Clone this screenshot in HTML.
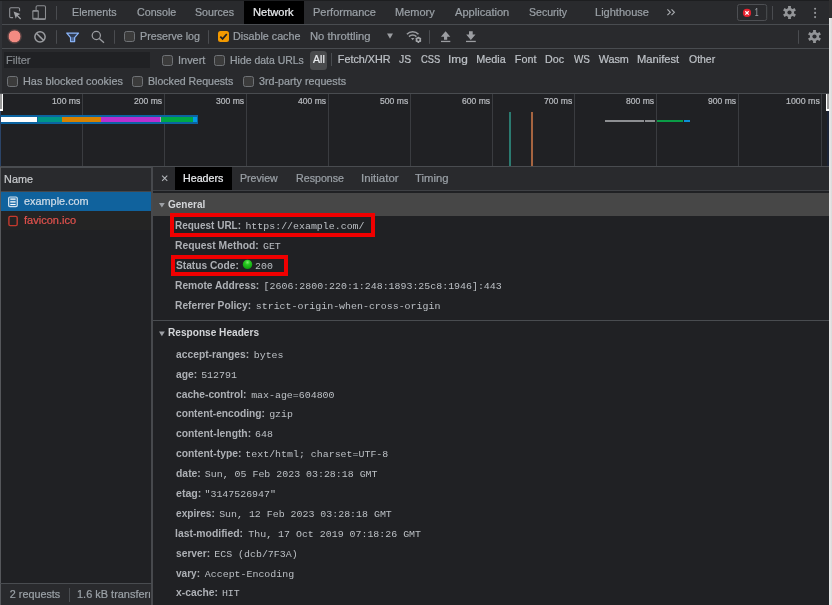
<!DOCTYPE html>
<html lang="en"><head><meta charset="utf-8"><title>DevTools - Network</title>
<style>
html,body{margin:0;padding:0;background:#202124;}
body{width:832px;height:605px;overflow:hidden;font:12px 'Liberation Sans',sans-serif;}
#root{will-change:transform;position:relative;width:832px;height:605px;overflow:hidden;background:#202124;}
#root>div,#root>svg,#tx>span,#tx>div{position:absolute;}
#tx{left:0;top:0;width:832px;height:605px;filter:blur(0.3px);}
.t{white-space:pre;transform-origin:0 50%;display:block;}
.n{font:10.8px/14px 'Liberation Sans',sans-serif;-webkit-text-stroke:0.22px currentColor;}
.b{font:bold 10.8px/14px 'Liberation Sans',sans-serif;}
.m{font:9.93px/13px 'Liberation Mono',monospace;}
.bar{background:#292a2d;}
.hl{background:#494c50;height:1px;}
.vl{background:#494c50;width:1px;}
.cb{width:9px;height:9px;border:1px solid #6f7276;border-radius:2.5px;background:#3b3b3b;box-sizing:content-box;}

</style></head>
<body>
<div id="root">
<!-- top tab bar -->
<div class="bar" style="left:0;top:0;width:832px;height:24px"></div>
<div class="hl" style="left:0;top:24px;width:832px"></div>
<div style="left:244px;top:1px;width:59.5px;height:23px;background:#000"></div>
<!-- toolbar row 2 -->
<div class="bar" style="left:0;top:25px;width:832px;height:23px"></div>
<div class="hl" style="left:0;top:48px;width:832px"></div>
<!-- filter rows -->
<div class="bar" style="left:0;top:49px;width:832px;height:44px"></div>
<div style="left:4px;top:52px;width:146px;height:16px;background:#202124"></div>
<div style="left:310px;top:51px;width:16.9px;height:18.9px;background:#4a4b4d;border-radius:3.5px"></div>
<div class="vl" style="left:331.4px;top:53px;height:13.4px"></div>
<div class="hl" style="left:0;top:93px;width:832px"></div>
<!-- timeline overview -->
<div style="left:0;top:94px;width:832px;height:72px;background:#202124"></div>
<!-- timeline grid + bars -->
<div class="vl" style="left:82px;top:94px;height:72px;background:#3a3c40"></div>
<div class="vl" style="left:164px;top:94px;height:72px;background:#3a3c40"></div>
<div class="vl" style="left:246px;top:94px;height:72px;background:#3a3c40"></div>
<div class="vl" style="left:328px;top:94px;height:72px;background:#3a3c40"></div>
<div class="vl" style="left:410px;top:94px;height:72px;background:#3a3c40"></div>
<div class="vl" style="left:492px;top:94px;height:72px;background:#3a3c40"></div>
<div class="vl" style="left:574px;top:94px;height:72px;background:#3a3c40"></div>
<div class="vl" style="left:656px;top:94px;height:72px;background:#3a3c40"></div>
<div class="vl" style="left:738px;top:94px;height:72px;background:#3a3c40"></div>
<div class="vl" style="left:821px;top:94px;height:72px;background:#3a3c40"></div>
<div style="left:0;top:115px;width:197.7px;height:9.4px;background:#0c64a1"></div>
<div style="left:1px;top:117px;width:36.0px;height:4.6px;background:#ffffff"></div>
<div style="left:37.5px;top:117px;width:24.5px;height:4.6px;background:#009688"></div>
<div style="left:62px;top:117px;width:38.5px;height:4.6px;background:#d68100"></div>
<div style="left:100.5px;top:117px;width:59.2px;height:4.6px;background:#b92fce"></div>
<div style="left:159.7px;top:117px;width:1.3px;height:4.6px;background:#c98fd0"></div>
<div style="left:161px;top:117px;width:31.5px;height:4.6px;background:#00a846"></div>
<div style="left:192.5px;top:117px;width:4.1px;height:4.6px;background:#039be5"></div>
<div style="left:508.5px;top:112px;width:2.4px;height:54px;background:#2b7a70"></div>
<div style="left:530.9px;top:112px;width:2.4px;height:54px;background:#a56440"></div>
<div style="left:604.5px;top:119.6px;width:39.2px;height:2.2px;background:#8d8f92"></div>
<div style="left:645.2px;top:119.6px;width:10.1px;height:2.2px;background:#8d8f92"></div>
<div style="left:656.7px;top:119.6px;width:26.1px;height:2.2px;background:#0a9c46"></div>
<div style="left:684.2px;top:119.6px;width:6.1px;height:2.2px;background:#0d8fd6"></div>
<div style="left:0;top:94px;width:3px;height:17px;background:#fff"></div>
<div style="left:0;top:94px;width:1.9px;height:15.2px;background:#9a9a9a"></div>
<div style="left:826px;top:94px;width:3px;height:17px;background:#fff"></div>
<div style="left:827.4px;top:94px;width:1.6px;height:15.2px;background:#9a9a9a"></div>
<div style="left:0;top:111px;width:1px;height:55px;background:#2b4468"></div>
<div class="hl" style="left:0;top:166px;width:832px;background:#494c50"></div>
<!-- name column -->
<div class="bar" style="left:1px;top:168px;width:150px;height:23px"></div>
<div class="hl" style="left:0;top:167px;width:152px"></div>
<div class="hl" style="left:0;top:191px;width:152px;background:#44464a"></div>
<div style="left:1px;top:192px;width:150px;height:19px;background:#10629d"></div>
<div style="left:1px;top:211px;width:150px;height:19px;background:#242424"></div>
<div class="vl" style="left:151px;top:167px;height:438px;width:2px;background:#47494d"></div>
<div class="vl" style="left:0;top:167px;height:438px;width:1px;background:#55575b"></div>
<div class="hl" style="left:0;top:583px;width:152px"></div>
<div class="bar" style="left:1px;top:584px;width:150px;height:21px"></div>
<div class="vl" style="left:69px;top:588px;height:14px"></div>
<!-- detail pane -->
<div class="bar" style="left:153px;top:167px;width:679px;height:23px"></div>
<div class="hl" style="left:153px;top:190px;width:679px;background:#3f4145"></div>
<div style="left:175px;top:167px;width:56.5px;height:23px;background:#000"></div>
<div style="left:153px;top:193px;width:679px;height:23px;background:#474747"></div>
<div class="hl" style="left:153px;top:320px;width:679px;background:#494c50"></div>
<!-- red annotation boxes -->
<div style="left:170.1px;top:213.3px;width:197px;height:15.4px;border:4px solid #f00000"></div>
<div style="left:170.8px;top:254.9px;width:109.3px;height:13.1px;border:4px solid #f00000"></div>
<!-- right light strip -->
<div style="left:829px;top:18px;width:3px;height:587px;background:linear-gradient(90deg,#ededed,#d9d9d9)"></div>
<div style="left:829px;top:0;width:3px;height:18px;background:#2f2f30"></div>
<!-- checkboxes -->
<div class="cb" style="left:124px;top:31px"></div>
<div class="cb" style="left:162px;top:55px"></div>
<div class="cb" style="left:213.9px;top:55px"></div>
<div class="cb" style="left:7px;top:76px"></div>
<div class="cb" style="left:132px;top:76px"></div>
<div class="cb" style="left:243px;top:76px"></div>
<div style="left:218px;top:31px;width:11px;height:11px;border-radius:2.5px;background:#f29900"></div>
<svg style="left:218px;top:31px" width="11" height="11" viewBox="0 0 11 11"><path d="M2.3 5.6 L4.6 7.9 L8.8 3" fill="none" stroke="#202124" stroke-width="1.7"/></svg>
<!-- edge strips -->
<div style="left:0;top:1px;width:2px;height:92px;background:#313337"></div>
<div style="left:0;top:0;width:829px;height:1px;background:#1d1e20"></div>
<!-- navy sliver under right handle --><div style="left:827px;top:111px;width:2px;height:55px;background:#1c2436"></div>
<!-- icon layer (page coordinates) -->
<svg style="left:0;top:0" width="832" height="605" viewBox="0 0 832 605" fill="none">
<defs>
<radialGradient id="gball" cx="0.5" cy="0.28" r="0.75"><stop offset="0" stop-color="#7dea6f"/><stop offset="0.35" stop-color="#27c81f"/><stop offset="1" stop-color="#0a9a0c"/></radialGradient>
<radialGradient id="rglow" cx="0.5" cy="0.5" r="0.5"><stop offset="0.72" stop-color="#f28b82"/><stop offset="0.78" stop-color="#f28b82" stop-opacity="0.35"/><stop offset="1" stop-color="#f28b82" stop-opacity="0"/></radialGradient>
<path id="gear" d="M5.6 0.35 5.95 1.55 4.95 3.25 3.75 3.6 2.7 5 1.8 4.1 -0.2 4.1 -1.1 5 -2.7 5 -3.75 3.6 -4.95 3.25 -5.95 1.55 -5.6 0.35 -6.4 -0.9 -5.6 -2.3 -4.95 -3.25 -3.75 -3.6"/>
</defs>
<!-- inspect element -->
<path d="M19.6 11.2V8.9a1.2 1.2 0 0 0-1.2-1.2H10.9a1.2 1.2 0 0 0-1.2 1.2v7.5a1.2 1.2 0 0 0 1.2 1.2h2.2" stroke="#919398" stroke-width="1.05"/>
<path d="M13.6 11.6 20.3 13.9 17.8 15.2 21.1 18.5 20.2 19.4 16.9 16.1 15.8 18.7z" fill="#a1a3a7"/>
<!-- device toolbar -->
<rect x="36.1" y="5.7" width="9.4" height="13.7" rx="1.4" stroke="#8b8d91" stroke-width="1.05"/>
<path d="M36.1 18.9h9.4" stroke="#8b8d91" stroke-width="1.5"/>
<rect x="32.3" y="10" width="6.5" height="9.7" rx="1.3" fill="#8b8d91"/>
<rect x="33.4" y="11.8" width="4.3" height="6" fill="#292a2d"/>
<path d="M56.5 6v13.8M56.5 30.2v13.6M114.5 30.2v13.6M208.5 30.2v13.6M429.5 30.2v13.6M772.5 6v13.8M798.5 30.2v13.6" stroke="#4a4c50" stroke-width="1"/>
<!-- record -->
<circle cx="14.55" cy="36.4" r="7.8" fill="url(#rglow)"/>
<!-- clear -->
<circle cx="40" cy="36.8" r="5.15" stroke="#9b9da1" stroke-width="1.5"/>
<path d="M36.4 33.2 43.6 40.4" stroke="#9b9da1" stroke-width="1.5"/>
<!-- filter funnel -->
<path d="M66.8 33.1H78.5L74.6 37.6V41.6H70.6V37.6z" fill="#303c52" stroke="#8ab4f8" stroke-width="1.3" stroke-linejoin="round"/><rect x="71.2" y="37.2" width="2.8" height="3.9" fill="#4f6a98"/>
<!-- search -->
<circle cx="96.3" cy="35.5" r="4.1" stroke="#9b9da1" stroke-width="1.25"/>
<path d="M99.3 38.6 104 42.8" stroke="#9b9da1" stroke-width="1.35"/>
<!-- throttling dropdown arrow -->
<path d="M387 33.6h6l-3 5.2z" fill="#9b9da1"/>
<!-- wifi + gear -->
<path d="M406.9 34.2a8.2 8.2 0 0 1 11.6 0" stroke="#9b9da1" stroke-width="1.6"/>
<path d="M409 36.6a5.2 5.2 0 0 1 7.4 0" stroke="#9b9da1" stroke-width="1.5"/>
<path d="M411 38.1h3.4l-1.7 2.1z" fill="#9b9da1"/>
<g transform="translate(418.4 39.8) scale(0.47)"><circle r="4.2" stroke="#a4a6aa" stroke-width="3.2"/><path d="M0-6.6V6.6M-5.7-3.3 5.7 3.3M-5.7 3.3 5.7-3.3" stroke="#a4a6aa" stroke-width="2.6"/><circle r="2.3" fill="#292a2d"/></g>
<!-- upload / download -->
<path d="M445.6 31.2 450.3 36.8H447.2V39.8H444V36.8H440.9z" fill="#9b9da1"/>
<rect x="441" y="40.8" width="9.3" height="1.3" fill="#9b9da1"/>
<path d="M469 31.2H472.7V34.4H475.5L470.85 39.9 466.2 34.4H469z" fill="#9b9da1"/>
<rect x="466" y="40.8" width="9.8" height="1.3" fill="#9b9da1"/>
<!-- chevrons >> -->
<path d="M667.4 9.4 670.3 12.3 667.4 15.2M671.5 9.4 674.4 12.3 671.5 15.2" stroke="#a9acb0" stroke-width="1.15"/>
<!-- error badge -->
<rect x="737.5" y="4.5" width="29.2" height="16" rx="2" stroke="#4d4f53" stroke-width="1"/>
<circle cx="747" cy="12.9" r="4.1" fill="#e8222f"/>
<path d="M745.3 11.2 748.7 14.6M748.7 11.2 745.3 14.6" stroke="#fff" stroke-width="1.25"/>
<!-- gears -->
<g transform="translate(789.5 12.5)"><circle r="3.35" stroke="#939598" stroke-width="2.5"/><path d="M0-6.6V6.6M-5.72-3.3 5.72 3.3M-5.72 3.3 5.72-3.3" stroke="#939598" stroke-width="2.8"/><circle r="2.1" fill="#292a2d"/></g>
<g transform="translate(814.5 36.5)"><circle r="3.35" stroke="#939598" stroke-width="2.5"/><path d="M0-6.6V6.6M-5.72-3.3 5.72 3.3M-5.72 3.3 5.72-3.3" stroke="#939598" stroke-width="2.8"/><circle r="2.1" fill="#292a2d"/></g>
<!-- kebab -->
<circle cx="815.1" cy="8.7" r="1.05" fill="#96989c"/><circle cx="815.1" cy="12.9" r="1.05" fill="#96989c"/><circle cx="815.1" cy="17.1" r="1.05" fill="#96989c"/>
<!-- row icons -->
<rect x="8.6" y="197" width="8.7" height="9.7" rx="1.4" stroke="#cfe0ee" stroke-width="1.2" fill="#2d78b0"/>
<path d="M10.3 199.2h5.3M10.3 201.8h5.3M10.3 204.5h5.3" stroke="#fff" stroke-width="1.2"/>
<rect x="8.9" y="216.4" width="8.3" height="9.2" rx="1.4" stroke="#c43a2d" stroke-width="1.4"/>
<!-- close x -->
<path d="M162.1 175.6 167.3 180.8M167.3 175.6 162.1 180.8" stroke="#b3b6ba" stroke-width="1.05"/>
<!-- section triangles -->
<path d="M159 202.9h5.8l-2.9 4.6z" fill="#9da0a5"/>
<path d="M159 331.6h5.8l-2.9 4.6z" fill="#9da0a5"/>
<!-- status ball -->
<circle cx="247.5" cy="264.4" r="4.7" fill="url(#gball)"/>
</svg>

<!-- text layer -->
<div id="tx">
<span class="t n" style="left:71.61px;top:5.00px;color:#9aa0a6;transform:scaleX(0.9907);">Elements</span>
<span class="t n" style="left:136.58px;top:5.00px;color:#9aa0a6;transform:scaleX(0.9905);">Console</span>
<span class="t n" style="left:194.57px;top:5.00px;color:#9aa0a6;transform:scaleX(0.9842);">Sources</span>
<span class="t n" style="left:313.28px;top:5.00px;color:#9aa0a6;transform:scaleX(1.0183);">Performance</span>
<span class="t n" style="left:395.28px;top:5.00px;color:#9aa0a6;transform:scaleX(1.0178);">Memory</span>
<span class="t n" style="left:455.12px;top:5.00px;color:#9aa0a6;transform:scaleX(1.0277);">Application</span>
<span class="t n" style="left:528.87px;top:5.00px;color:#9aa0a6;transform:scaleX(0.9767);">Security</span>
<span class="t n" style="left:594.76px;top:5.00px;color:#9aa0a6;transform:scaleX(1.0219);">Lighthouse</span>
<span class="t n" style="left:252.77px;top:5.00px;color:#e8eaed;transform:scaleX(1.0270);">Network</span>
<span class="t n" style="left:755.33px;top:5.00px;color:#9aa0a6;transform:scaleX(0.5661);">1</span>
<span class="t n" style="left:139.91px;top:29.00px;color:#9aa0a6;transform:scaleX(0.9895);">Preserve log</span>
<span class="t n" style="left:233.29px;top:29.00px;color:#9aa0a6;transform:scaleX(0.9943);">Disable cache</span>
<span class="t n" style="left:310.26px;top:29.00px;color:#9aa0a6;transform:scaleX(1.0408);">No throttling</span>
<span class="t n" style="left:5.98px;top:53.00px;color:#85898e;transform:scaleX(1.0205);">Filter</span>
<span class="t n" style="left:177.69px;top:53.00px;color:#9aa0a6;transform:scaleX(1.0141);">Invert</span>
<span class="t n" style="left:229.83px;top:53.00px;color:#9aa0a6;transform:scaleX(0.9687);">Hide data URLs</span>
<span class="t n" style="left:312.83px;top:52.00px;color:#e8eaed;transform:scaleX(0.9773);">All</span>
<span class="t n" style="left:337.80px;top:52.00px;color:#bdc1c6;">Fetch/XHR</span>
<span class="t n" style="left:399.35px;top:52.00px;color:#bdc1c6;transform:scaleX(0.9662);">JS</span>
<span class="t n" style="left:420.85px;top:52.00px;color:#bdc1c6;transform:scaleX(0.8684);">CSS</span>
<span class="t n" style="left:448.21px;top:52.00px;color:#bdc1c6;transform:scaleX(1.0949);">Img</span>
<span class="t n" style="left:476.30px;top:52.00px;color:#bdc1c6;">Media</span>
<span class="t n" style="left:514.80px;top:52.00px;color:#bdc1c6;">Font</span>
<span class="t n" style="left:545.29px;top:52.00px;color:#bdc1c6;transform:scaleX(0.9891);">Doc</span>
<span class="t n" style="left:573.66px;top:52.00px;color:#bdc1c6;transform:scaleX(0.9180);">WS</span>
<span class="t n" style="left:598.65px;top:52.00px;color:#bdc1c6;">Wasm</span>
<span class="t n" style="left:637.27px;top:52.00px;color:#bdc1c6;transform:scaleX(1.0337);">Manifest</span>
<span class="t n" style="left:688.82px;top:52.00px;color:#bdc1c6;transform:scaleX(0.9682);">Other</span>
<span class="t n" style="left:22.79px;top:74.00px;color:#9aa0a6;transform:scaleX(1.0092);">Has blocked cookies</span>
<span class="t n" style="left:147.92px;top:74.00px;color:#9aa0a6;transform:scaleX(0.9809);">Blocked Requests</span>
<span class="t n" style="left:258.76px;top:74.00px;color:#9aa0a6;transform:scaleX(0.9930);">3rd-party requests</span>
<span class="t n" style="left:52.02px;top:95.00px;color:#b9bcc0;font-size:9px;line-height:12px;transform:scaleX(0.9617);">100 ms</span>
<span class="t n" style="left:134.27px;top:95.00px;color:#b9bcc0;font-size:9px;line-height:12px;transform:scaleX(0.9532);">200 ms</span>
<span class="t n" style="left:216.25px;top:95.00px;color:#b9bcc0;font-size:9px;line-height:12px;transform:scaleX(0.9539);">300 ms</span>
<span class="t n" style="left:298.34px;top:95.00px;color:#b9bcc0;font-size:9px;line-height:12px;transform:scaleX(0.9506);">400 ms</span>
<span class="t n" style="left:380.19px;top:95.00px;color:#b9bcc0;font-size:9px;line-height:12px;transform:scaleX(0.9560);">500 ms</span>
<span class="t n" style="left:462.29px;top:95.00px;color:#b9bcc0;font-size:9px;line-height:12px;transform:scaleX(0.9523);">600 ms</span>
<span class="t n" style="left:544.19px;top:95.00px;color:#b9bcc0;font-size:9px;line-height:12px;transform:scaleX(0.9560);">700 ms</span>
<span class="t n" style="left:626.28px;top:95.00px;color:#b9bcc0;font-size:9px;line-height:12px;transform:scaleX(0.9527);">800 ms</span>
<span class="t n" style="left:708.29px;top:95.00px;color:#b9bcc0;font-size:9px;line-height:12px;transform:scaleX(0.9523);">900 ms</span>
<span class="t n" style="left:785.61px;top:95.00px;color:#b9bcc0;font-size:9px;line-height:12px;transform:scaleX(0.9796);">1000 ms</span>
<span class="t n" style="left:4.10px;top:172.00px;color:#c8cacd;">Name</span>
<span class="t n" style="left:23.64px;top:194.00px;color:#d0dce7;transform:scaleX(1.0074);">example.com</span>
<span class="t n" style="left:23.79px;top:213.00px;color:#e2524d;transform:scaleX(1.0212);">favicon.ico</span>
<span class="t n" style="left:9.80px;top:587.00px;color:#9aa0a6;">2 requests</span>
<div style="left:70px;top:584px;width:79.5px;height:21px;overflow:hidden"><span class="t n" style="position:absolute;left:6.99px;top:3.00px;color:#9aa0a6;transform:scaleX(1.0142);">1.6 kB transferred</span></div>
<span class="t n" style="left:183.01px;top:171.00px;color:#e8eaed;transform:scaleX(0.9897);">Headers</span>
<span class="t n" style="left:240.32px;top:171.00px;color:#9aa0a6;transform:scaleX(0.9828);">Preview</span>
<span class="t n" style="left:295.81px;top:171.00px;color:#9aa0a6;transform:scaleX(0.9875);">Response</span>
<span class="t n" style="left:360.74px;top:171.00px;color:#9aa0a6;transform:scaleX(1.0621);">Initiator</span>
<span class="t n" style="left:415.40px;top:171.00px;color:#9aa0a6;transform:scaleX(1.0462);">Timing</span>
<span class="t b" style="left:167.78px;top:197.00px;color:#d3d5d8;transform:scaleX(0.9284);">General</span>
<span class="t b" style="left:167.59px;top:325.00px;color:#d3d5d8;transform:scaleX(0.9363);">Response Headers</span>
<span class="t b" style="left:175.49px;top:218.00px;color:#adb0b5;transform:scaleX(0.9251);">Request URL:</span>
<span class="t m" style="left:245.42px;top:220.00px;color:#bcc0c5;">https://example.com/</span>
<span class="t b" style="left:175.47px;top:238.00px;color:#adb0b5;transform:scaleX(0.9562);">Request Method:</span>
<span class="t m" style="left:262.95px;top:240.00px;color:#bcc0c5;">GET</span>
<span class="t b" style="left:175.69px;top:258.00px;color:#adb0b5;transform:scaleX(0.9435);">Status Code:</span>
<span class="t m" style="left:255.08px;top:260.00px;color:#bcc0c5;">200</span>
<span class="t b" style="left:175.48px;top:278.00px;color:#adb0b5;transform:scaleX(0.9468);">Remote Address:</span>
<span class="t m" style="left:263.57px;top:280.00px;color:#bcc0c5;">[2606:2800:220:1:248:1893:25c8:1946]:443</span>
<span class="t b" style="left:175.48px;top:298.00px;color:#adb0b5;transform:scaleX(0.9464);">Referrer Policy:</span>
<span class="t m" style="left:255.77px;top:300.00px;color:#bcc0c5;">strict-origin-when-cross-origin</span>
<span class="t b" style="left:175.77px;top:347.00px;color:#adb0b5;transform:scaleX(0.9524);">accept-ranges:</span>
<span class="t m" style="left:253.74px;top:349.00px;color:#bcc0c5;">bytes</span>
<span class="t b" style="left:175.77px;top:367.00px;color:#adb0b5;transform:scaleX(0.9539);">age:</span>
<span class="t m" style="left:201.16px;top:369.00px;color:#bcc0c5;">512791</span>
<span class="t b" style="left:175.69px;top:387.00px;color:#adb0b5;transform:scaleX(0.9473);">cache-control:</span>
<span class="t m" style="left:251.15px;top:389.00px;color:#bcc0c5;">max-age=604800</span>
<span class="t b" style="left:175.69px;top:406.00px;color:#adb0b5;transform:scaleX(0.9442);">content-encoding:</span>
<span class="t m" style="left:269.15px;top:408.00px;color:#bcc0c5;">gzip</span>
<span class="t b" style="left:175.69px;top:426.00px;color:#adb0b5;transform:scaleX(0.9561);">content-length:</span>
<span class="t m" style="left:255.09px;top:428.00px;color:#bcc0c5;">648</span>
<span class="t b" style="left:175.69px;top:446.00px;color:#adb0b5;transform:scaleX(0.9560);">content-type:</span>
<span class="t m" style="left:245.35px;top:448.00px;color:#bcc0c5;">text/html; charset=UTF-8</span>
<span class="t b" style="left:175.68px;top:466.00px;color:#adb0b5;transform:scaleX(0.9627);">date:</span>
<span class="t m" style="left:204.84px;top:468.00px;color:#bcc0c5;">Sun, 05 Feb 2023 03:28:18 GMT</span>
<span class="t b" style="left:175.68px;top:486.00px;color:#adb0b5;transform:scaleX(0.9831);">etag:</span>
<span class="t m" style="left:204.47px;top:488.00px;color:#bcc0c5;">&quot;3147526947&quot;</span>
<span class="t b" style="left:175.70px;top:506.00px;color:#adb0b5;transform:scaleX(0.9388);">expires:</span>
<span class="t m" style="left:219.14px;top:508.00px;color:#bcc0c5;">Sun, 12 Feb 2023 03:28:18 GMT</span>
<span class="t b" style="left:175.44px;top:526.00px;color:#adb0b5;transform:scaleX(0.9616);">last-modified:</span>
<span class="t m" style="left:248.33px;top:528.00px;color:#bcc0c5;">Thu, 17 Oct 2019 07:18:26 GMT</span>
<span class="t b" style="left:175.52px;top:546.00px;color:#adb0b5;transform:scaleX(0.9480);">server:</span>
<span class="t m" style="left:214.28px;top:548.00px;color:#bcc0c5;">ECS (dcb/7F3A)</span>
<span class="t b" style="left:175.93px;top:566.00px;color:#adb0b5;transform:scaleX(0.9327);">vary:</span>
<span class="t m" style="left:204.83px;top:568.00px;color:#bcc0c5;">Accept-Encoding</span>
<span class="t b" style="left:175.74px;top:585.00px;color:#adb0b5;transform:scaleX(0.9560);">x-cache:</span>
<span class="t m" style="left:221.88px;top:587.00px;color:#bcc0c5;">HIT</span>
</div>
</div>
</body></html>
